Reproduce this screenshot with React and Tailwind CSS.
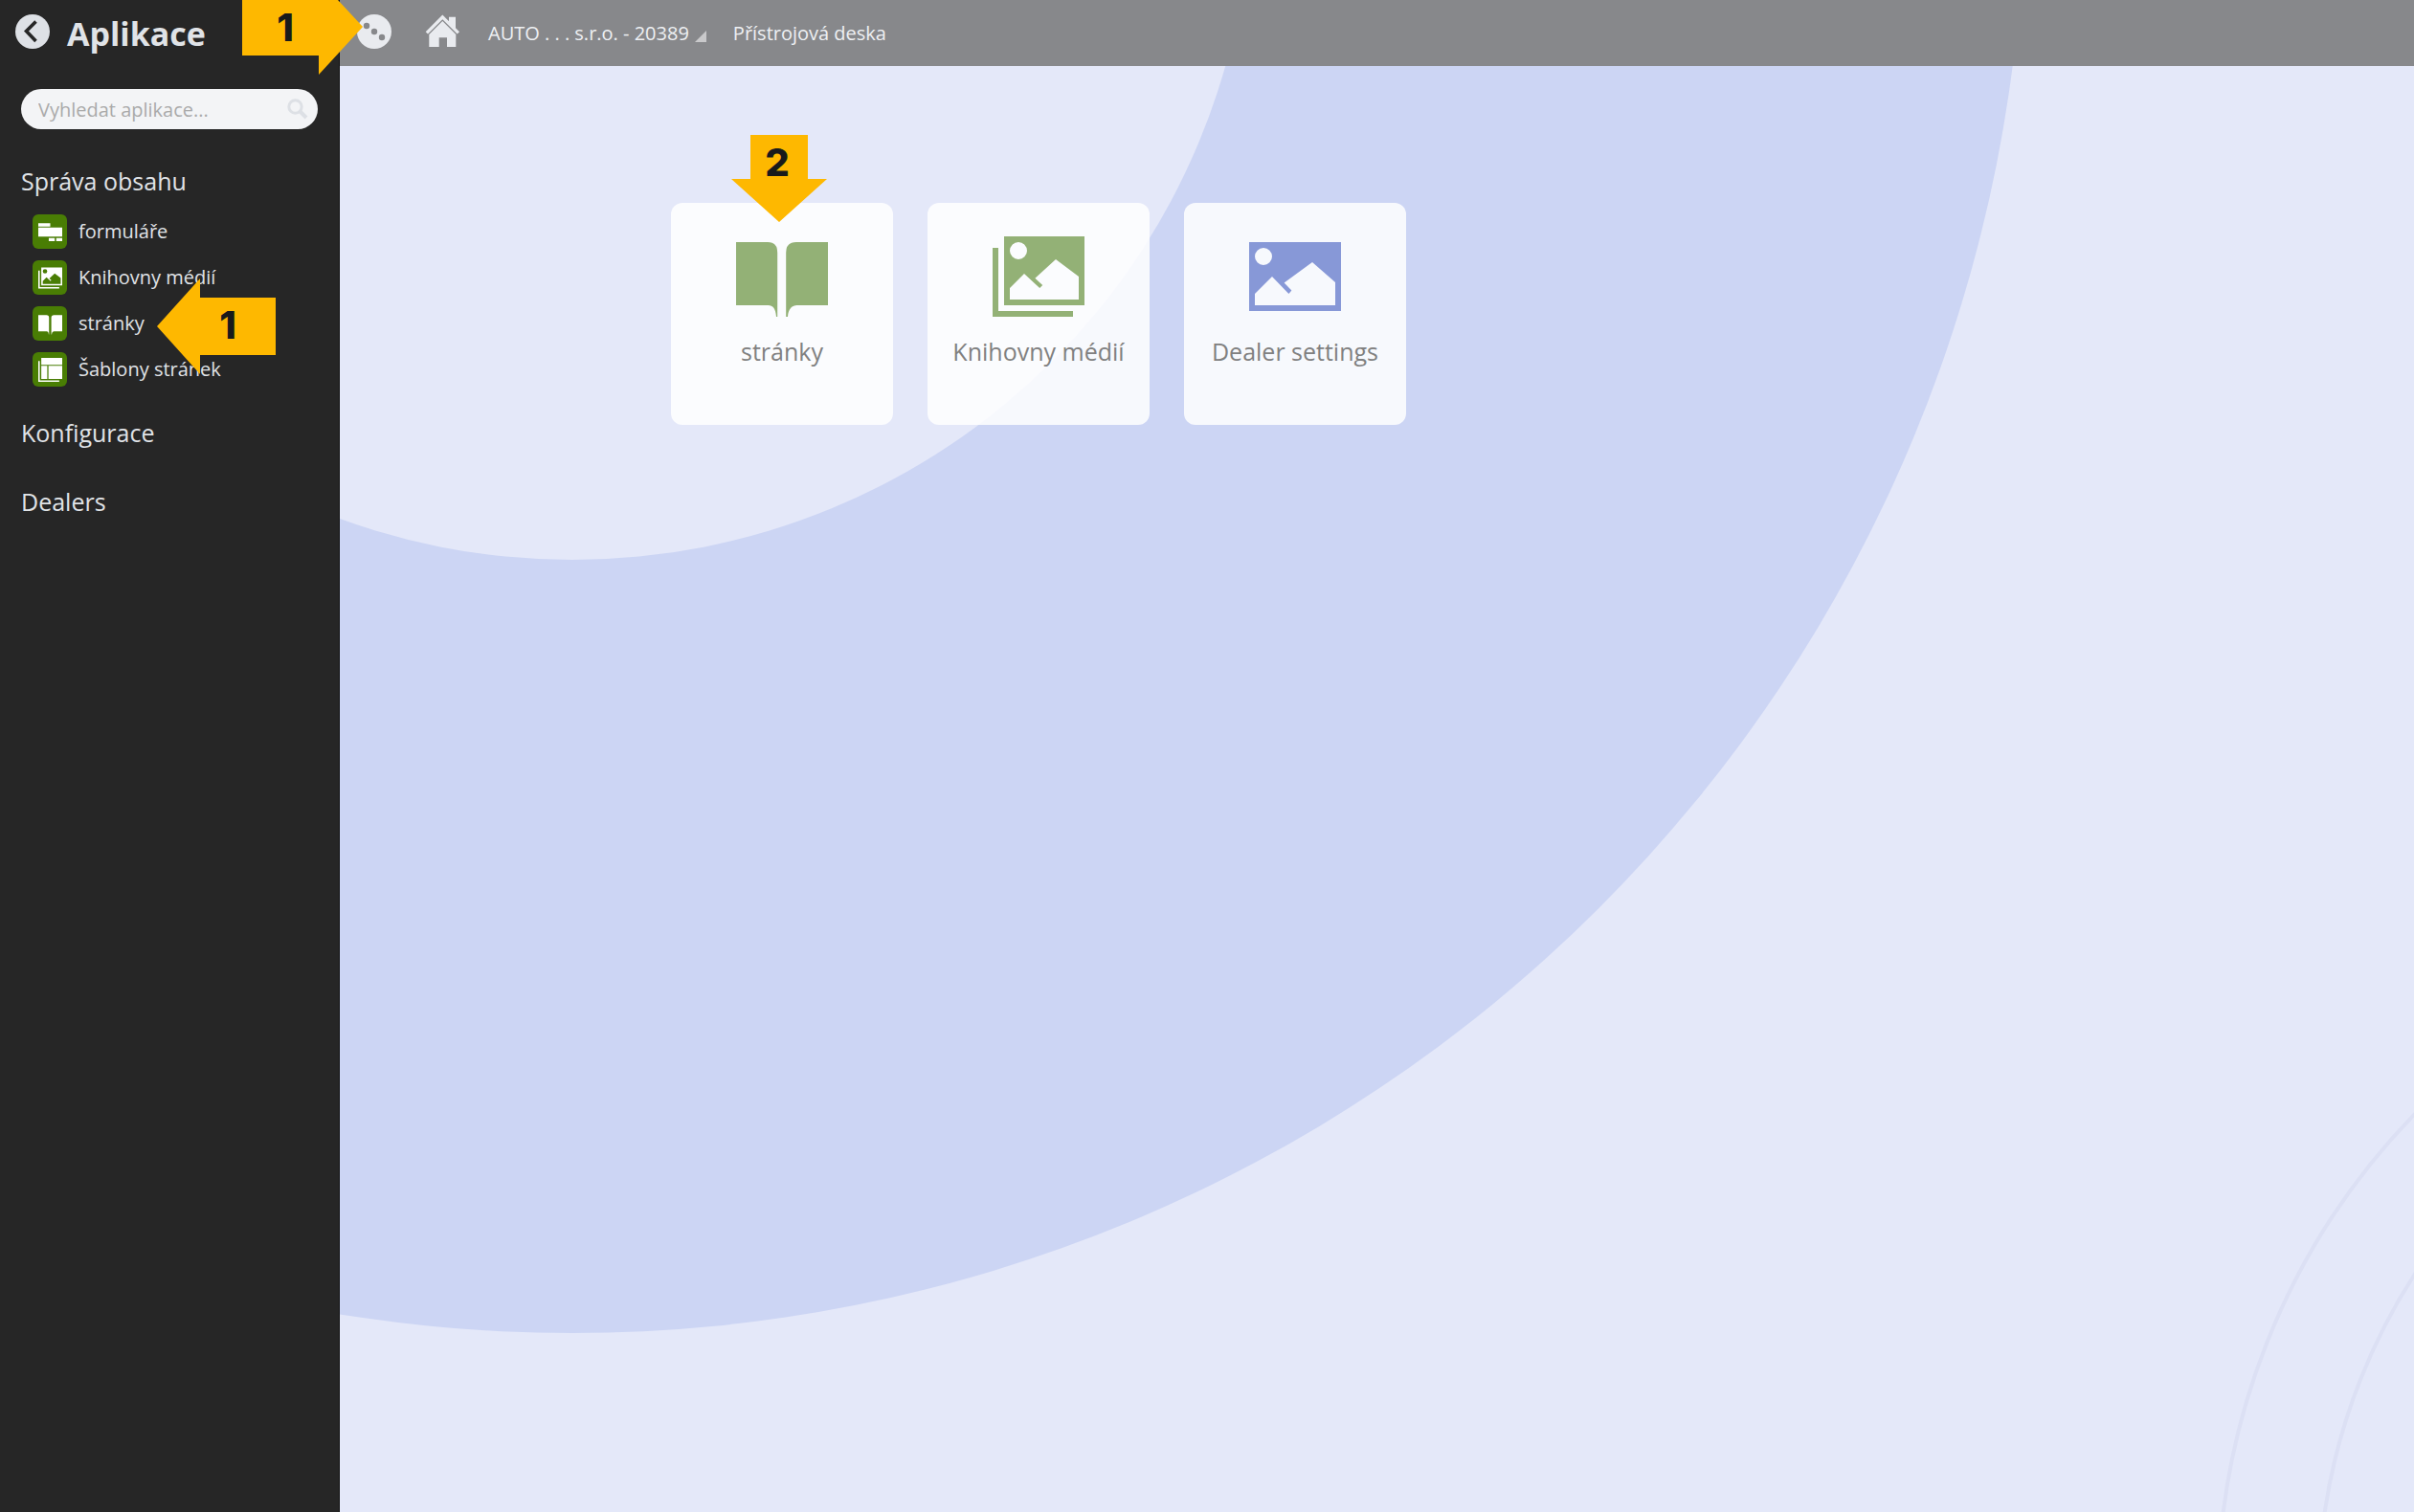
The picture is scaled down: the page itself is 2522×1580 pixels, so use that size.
const glyphs = {
  forms: "M0 2H8V4.3H0ZM0 5H16V11H0ZM7 12H11V14H7ZM12 12H16V14H12Z",
  media:
    "M2 1H16V13H2ZM6 3.5A1.5 1.5 0 1 0 3 3.5A1.5 1.5 0 1 0 6 3.5ZM3 10V12H15V8L11 5L7.4 8.3L8.7 9.5L8.2 10L5.5 7.5ZM0 3H1V14H14V15H0Z",
  book:
    "M0 2H5.5Q7.2 2 7.2 3.8V15H7C6.9 13.6 6.4 13 5.6 13H0ZM16 2H10.5Q8.7 2 8.7 3.8V15H9C9.1 13.6 9.8 13 10.6 13H16Z",
  templates: "M2 0H16V4.6H2ZM2 5.3H6V14H2ZM6.8 5.3H16V14H6.8ZM0 2H1V15H14V16H0Z",
  picture:
    "M0 2H16V14H0ZM4 4.5A1.5 1.5 0 1 0 1 4.5A1.5 1.5 0 1 0 4 4.5ZM1 11V13H15V9L11 5.5L6.1 9.1L7.4 10.4L6.9 11L4 8Z",
};

function Glyph({ name, className }) {
  return (
    <svg viewBox="0 0 16 16" className={className} fill="currentColor" fillRule="evenodd" aria-hidden="true">
      <path d={glyphs[name]} />
    </svg>
  );
}

function Callout({ label, points, viewBox, className, labelClass }) {
  return (
    <div className={`absolute z-20 pointer-events-none ${className}`}>
      <svg viewBox={viewBox} className="absolute inset-0 size-full" aria-hidden="true">
        <polygon points={points} fill="#feb800" />
      </svg>
      <span
        className={`relative flex justify-center font-['Inter',sans-serif] text-[40px] leading-[58px] font-extrabold text-[#181a1b] ${labelClass}`}
      >
        {label}
      </span>
    </div>
  );
}

const apps = [
  { name: "formuláře", glyph: "forms" },
  { name: "Knihovny médií", glyph: "media" },
  { name: "stránky", glyph: "book", callout: true },
  { name: "Šablony stránek", glyph: "templates" },
];

const tiles = [
  { name: "stránky", glyph: "book", color: "text-[#93b176]", callout: true },
  { name: "Knihovny médií", glyph: "media", color: "text-[#93b176]" },
  { name: "Dealer settings", glyph: "picture", color: "text-[#8798d7]" },
];

function Sidebar() {
  return (
    <aside className="relative z-10 w-[355px] shrink-0 border-r border-[#111111] bg-[#262626] text-[#e0e3e7]">
      <div className="flex h-[69px] items-center gap-[18px] pl-4">
        <button type="button" aria-label="Zpět" className="mb-1 size-9">
          <svg viewBox="0 0 36 36" className="size-9" aria-hidden="true">
            <circle cx="18" cy="18" r="18" fill="#dee1e6" />
            <path d="M21.5 7.5L11.5 17.5L21.5 28" fill="none" stroke="#262626" strokeWidth="3.6" />
          </svg>
        </button>
        <h1 className="text-[34px] leading-[40px] font-bold">Aplikace</h1>
      </div>
      <Callout
        label="1"
        viewBox="0 0 126 78"
        points="0,0 100,0 126,28 80,78 80,58 0,58"
        className="top-0 left-[253px] h-[78px] w-[126px]"
        labelClass="pr-9"
      />

      <label className="mt-6 mr-[22px] ml-[22px] flex h-[42px] items-center rounded-full bg-[#f3f4f6] pr-2.5 pl-[18px]">
        <input
          type="search"
          aria-label="Vyhledat aplikace"
          placeholder="Vyhledat aplikace..."
          className="min-w-0 flex-1 bg-transparent pt-0.5 text-[20px] text-gray-700 outline-none placeholder:text-[#aaaaaa]"
        />
        <svg viewBox="0 0 22 22" className="size-[22px] shrink-0" fill="none" stroke="#dde0e5" aria-hidden="true">
          <circle cx="8.5" cy="8.5" r="6.7" strokeWidth="3" />
          <path d="M13 13L20 20" strokeWidth="4" />
        </svg>
      </label>

      <nav className="mt-[34px] px-[22px]">
        <h2 className="text-[25px] leading-10">Správa obsahu</h2>
        <ul className="mt-[15px] flex flex-col gap-3 pl-3">
          {apps.map((app) => (
            <li key={app.name} className="relative">
              <a href="#" className="flex h-9 items-center gap-3">
                <span className="flex size-9 items-center justify-center rounded-md bg-[#497d04] text-white">
                  <Glyph name={app.glyph} className="size-[25px]" />
                </span>
                <span className="text-[20px] leading-9">{app.name}</span>
              </a>
              {app.callout && (
                <Callout
                  label="1"
                  viewBox="0 0 124 100"
                  points="0,50 45,0 45,20 124,20 124,80 45,80 45,100"
                  className="-top-[29px] left-[130px] h-[100px] w-[124px]"
                  labelClass="pt-5 pl-6"
                />
              )}
            </li>
          ))}
        </ul>
        <h2 className="mt-7 text-[25px] leading-10">Konfigurace</h2>
        <h2 className="mt-8 text-[25px] leading-10">Dealers</h2>
      </nav>
    </aside>
  );
}

function TopBar() {
  return (
    <header className="flex h-[69px] items-center bg-[#87888b] pl-[18px] text-[20px] text-[#eef0f3]">
      <button type="button" aria-label="Aplikace" className="mb-1 size-9">
        <svg viewBox="0 0 36 36" className="size-9" aria-hidden="true">
          <circle cx="18" cy="18" r="18" fill="#e9ebef" />
          <g fill="#87888b">
            <circle cx="10" cy="12" r="3.2" />
            <circle cx="18" cy="18" r="3.2" />
            <circle cx="26" cy="24" r="3.2" />
          </g>
        </svg>
      </button>
      <a href="#" aria-label="Domů" className="mb-1 ml-[35px] size-9">
        <svg viewBox="0 0 36 36" className="size-9" fill="#e9ebef" aria-hidden="true">
          <path d="M18.3.5L25 7.3V2.7H32V14.3L36 18.3L33.7 20.6L18.3 5.2L3 20.6L.7 18.3Z" />
          <path d="M18.3 7L32.3 21V34H23V24.3H14.7V34H4.3V21Z" />
        </svg>
      </a>
      <button type="button" className="ml-[30px] flex items-center gap-1.5">
        AUTO . . . s.r.o. - 20389
        <svg viewBox="0 0 12 12" className="mt-1.5 size-3" aria-hidden="true">
          <path d="M12 0V12H0Z" fill="#c9c9cb" />
        </svg>
      </button>
      <span className="ml-7">Přístrojová deska</span>
    </header>
  );
}

function Backdrop() {
  return (
    <svg
      viewBox="0 0 2167 1511"
      preserveAspectRatio="xMinYMin slice"
      className="absolute inset-0 size-full"
      aria-hidden="true"
    >
      <circle cx="243" cy="-193" r="1517" fill="#ccd5f4" />
      <circle cx="243" cy="-193" r="709" fill="#e4e8f9" />
      <g fill="none" stroke="#dce0f4" strokeWidth="4">
        <circle cx="2692" cy="1603" r="730" />
        <circle cx="2692" cy="1603" r="625" />
      </g>
    </svg>
  );
}

export default function App() {
  return (
    <div className="flex min-h-screen overflow-hidden font-['Segoe_UI','Open_Sans','Noto_Sans',sans-serif]">
      <Sidebar />
      <div className="flex min-w-0 flex-1 flex-col">
        <TopBar />
        <main className="relative flex-1 overflow-hidden bg-[#e4e8f9]">
          <Backdrop />
          <ul className="relative flex flex-wrap gap-9 pt-[143px] pl-[346px]">
            {tiles.map((tile) => (
              <li key={tile.name} className="relative">
                <a
                  href="#"
                  className="flex size-[232px] flex-col items-center rounded-xl bg-white/85 pt-[29px] text-[#808080]"
                >
                  <Glyph name={tile.glyph} className={`size-24 ${tile.color}`} />
                  <span className="mt-2.5 text-[25px] leading-10 whitespace-nowrap">{tile.name}</span>
                </a>
                {tile.callout && (
                  <Callout
                    label="2"
                    viewBox="0 0 100 91"
                    points="20,0 80,0 80,46 100,46 50,91 0,46 20,46"
                    className="-top-[71px] left-[63px] h-[91px] w-[100px]"
                    labelClass="pr-1"
                  />
                )}
              </li>
            ))}
          </ul>
        </main>
      </div>
    </div>
  );
}
